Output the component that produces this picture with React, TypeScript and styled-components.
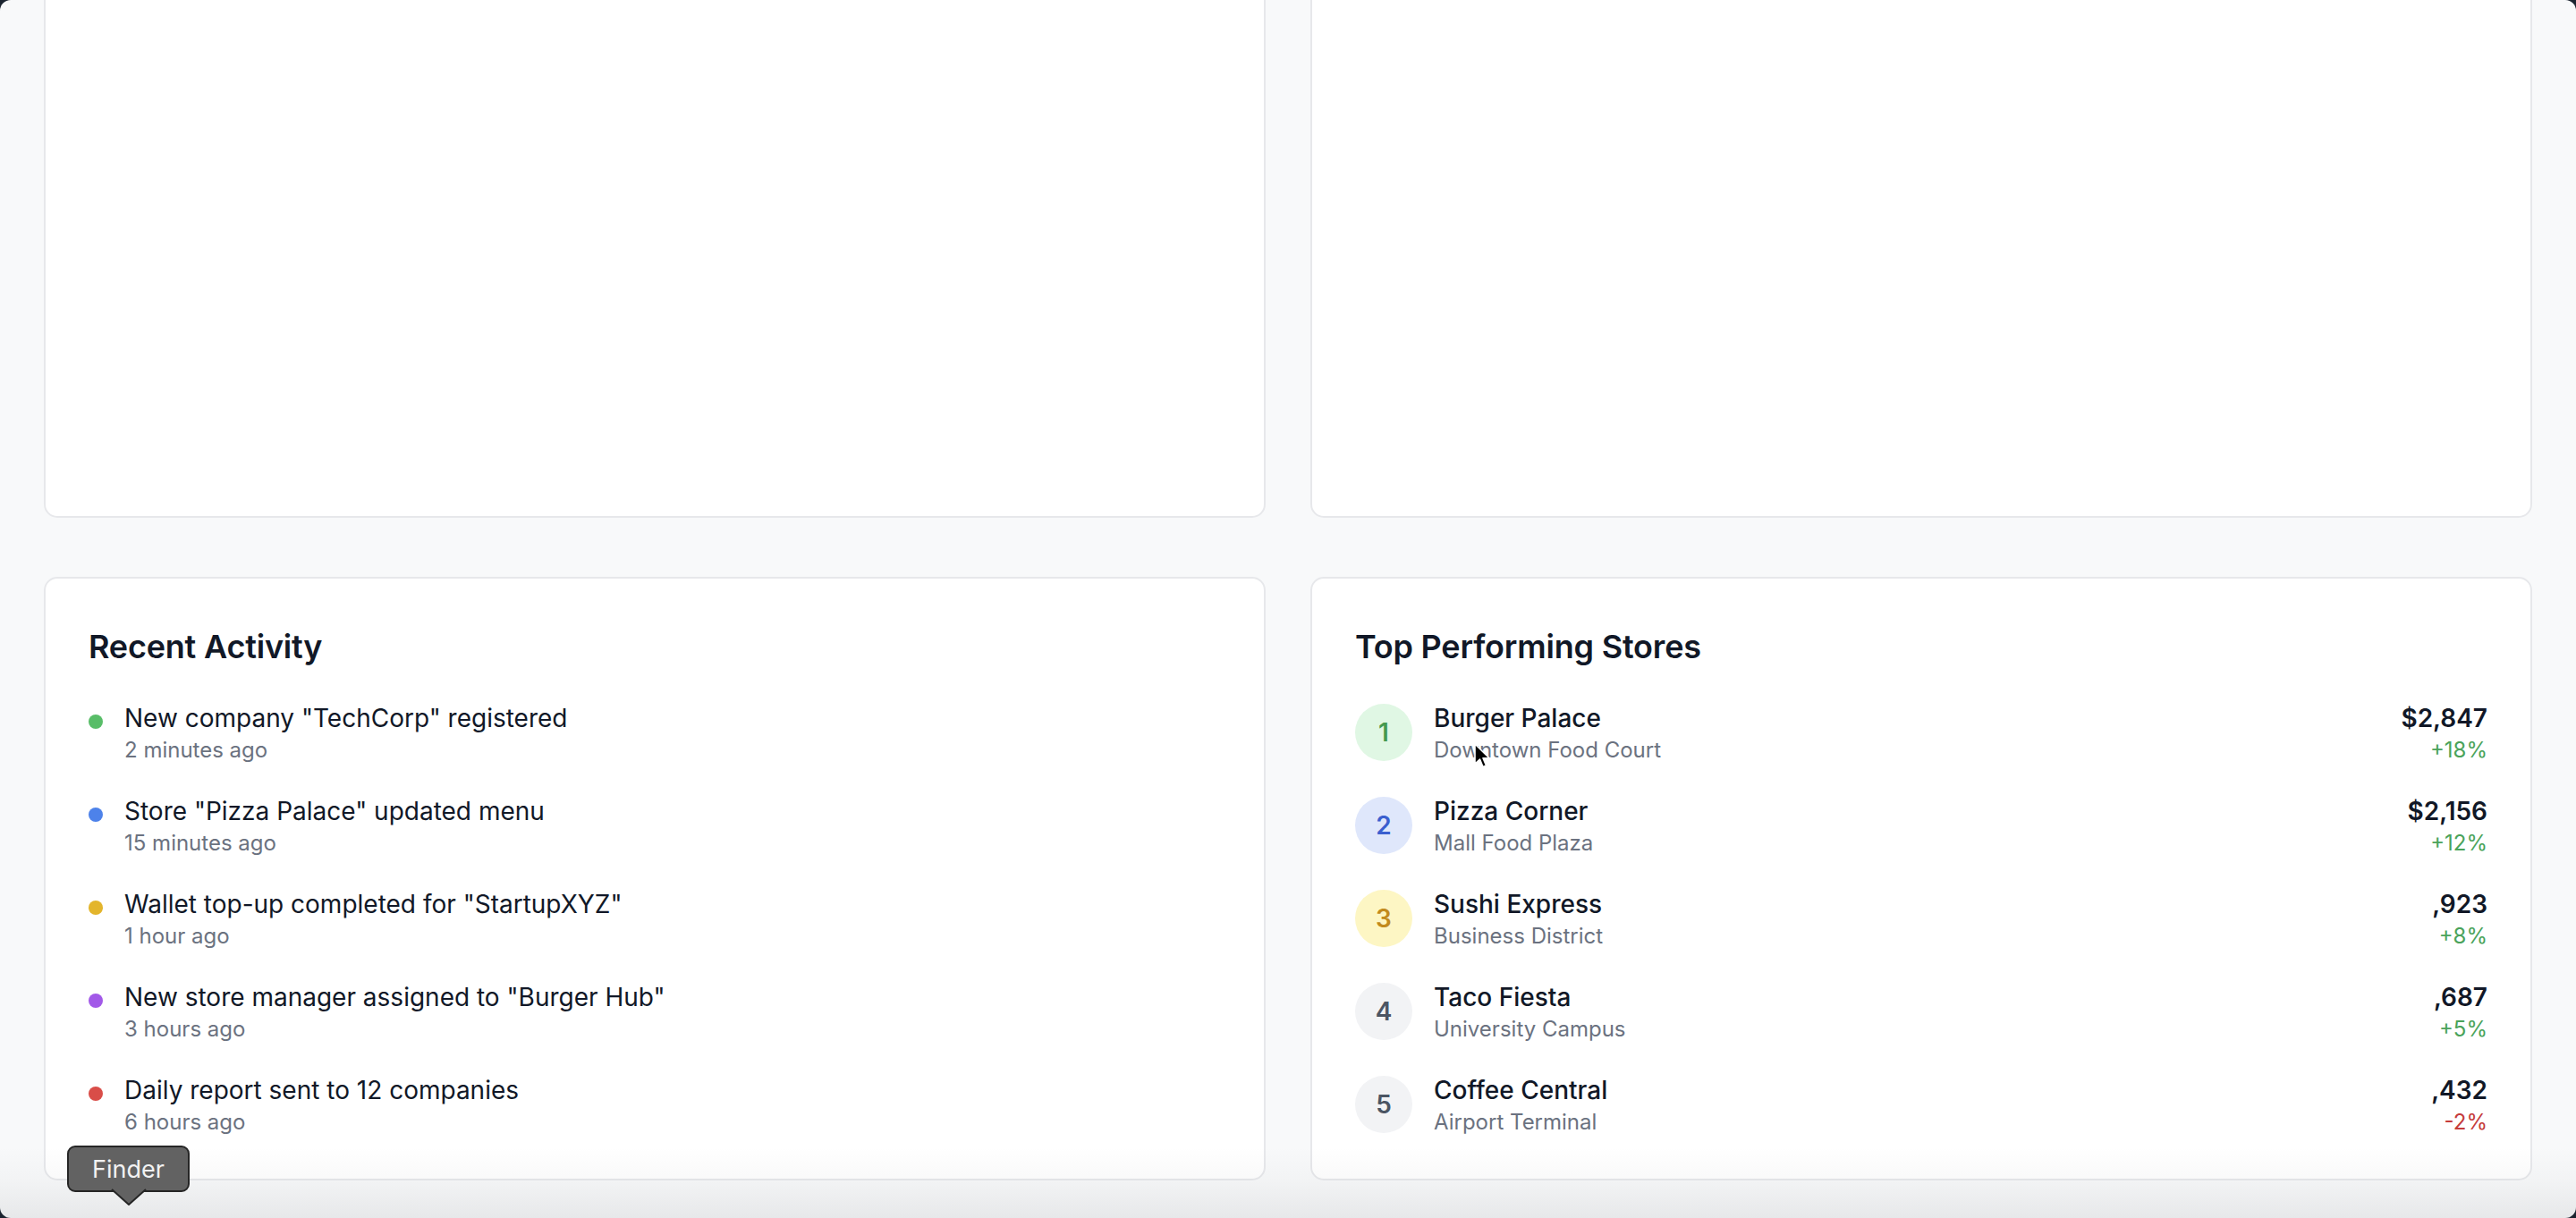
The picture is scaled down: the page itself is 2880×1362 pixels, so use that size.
import React from "react";
import styled, { createGlobalStyle } from "styled-components";

const GlobalStyle = createGlobalStyle`
  html, body {
    margin: 0;
    padding: 0;
    background: #1b2430;
  }
  body {
    font-family: Inter, "Noto Sans", "Liberation Sans", sans-serif;
    -webkit-font-smoothing: antialiased;
  }
  * { box-sizing: border-box; }
`;

const Window = styled.div`
  position: relative;
  width: 100vw;
  height: 100vh;
  overflow: hidden;
  border-radius: 12px;
  background: #f8f9fa;
`;

const Content = styled.main`
  display: grid;
  grid-template-columns: 1fr 1fr;
  column-gap: 50px;
  row-gap: 66px;
  padding: 0 49px;
  margin-top: -209px;
`;

const Card = styled.section<{ $tall?: boolean }>`
  background: #ffffff;
  border: 2px solid #e7e8eb;
  border-radius: 15px;
  height: ${(p) => (p.$tall ? "788px" : "auto")};
  padding: 51px 48px 47px;
`;

const CardTitle = styled.h2`
  margin: 0 0 35px;
  font-size: 36px;
  line-height: 50px;
  font-weight: 600;
  color: #111827;
  letter-spacing: -0.2px;
`;

const List = styled.ul`
  list-style: none;
  margin: 0;
  padding: 0;
  display: flex;
  flex-direction: column;
  gap: 32px;
`;

const ActivityRow = styled.li`
  display: flex;
  align-items: flex-start;
  gap: 24px;
`;

const Dot = styled.span<{ $color: string }>`
  flex: none;
  width: 16px;
  height: 16px;
  margin-top: 16px;
  border-radius: 50%;
  background: ${(p) => p.$color};
`;

const TextBlock = styled.div`
  display: flex;
  flex-direction: column;
  min-width: 0;
`;

const Primary = styled.span<{ $weight?: number }>`
  font-size: 28px;
  line-height: 40px;
  font-weight: ${(p) => p.$weight ?? 400};
  color: #111827;
`;

const Secondary = styled.span`
  font-size: 24px;
  line-height: 32px;
  color: #6b7280;
`;

const StoreRow = styled.li`
  display: flex;
  align-items: center;
  gap: 24px;
`;

const Rank = styled.span<{ $bg: string; $fg: string }>`
  flex: none;
  width: 64px;
  height: 64px;
  border-radius: 50%;
  display: flex;
  align-items: center;
  justify-content: center;
  background: ${(p) => p.$bg};
  color: ${(p) => p.$fg};
  font-size: 28px;
  font-weight: 600;
`;

const StoreInfo = styled(TextBlock)`
  flex: 1;
`;

const Figures = styled.div`
  display: flex;
  flex-direction: column;
  align-items: flex-end;
`;

const Amount = styled.span`
  font-size: 28px;
  line-height: 40px;
  font-weight: 600;
  color: #111827;
`;

const Change = styled.span<{ $up: boolean }>`
  font-size: 24px;
  line-height: 32px;
  color: ${(p) => (p.$up ? "#4aa35a" : "#c53b3b")};
`;

const DockShade = styled.div`
  position: absolute;
  left: 0;
  right: 0;
  bottom: 0;
  height: 80px;
  pointer-events: none;
  background: linear-gradient(
    to bottom,
    rgba(20, 24, 32, 0) 0%,
    rgba(20, 24, 32, 0.025) 45%,
    rgba(20, 24, 32, 0.075) 100%
  );
`;

const Tooltip = styled.div`
  position: absolute;
  left: 75px;
  top: 1281px;
  width: 137px;
  height: 52px;
  border-radius: 9px;
  background: #626262;
  border: 2px solid #262626;
  color: #f2f2f2;
  font-size: 27px;
  display: flex;
  align-items: center;
  justify-content: center;
`;

const TooltipArrow = styled.svg`
  position: absolute;
  left: 48px;
  top: 46px;
  overflow: visible;
`;

const Cursor = styled.svg`
  position: absolute;
  left: 1647px;
  top: 830px;
  pointer-events: none;
`;

const activities = [
  { color: "#58bd68", text: 'New company "TechCorp" registered', time: "2 minutes ago" },
  { color: "#4d82ea", text: 'Store "Pizza Palace" updated menu', time: "15 minutes ago" },
  { color: "#e3b52c", text: 'Wallet top-up completed for "StartupXYZ"', time: "1 hour ago" },
  { color: "#a259e8", text: 'New store manager assigned to "Burger Hub"', time: "3 hours ago" },
  { color: "#d94d48", text: "Daily report sent to 12 companies", time: "6 hours ago" },
];

const stores = [
  { name: "Burger Palace", place: "Downtown Food Court", amount: "$2,847", change: "+18%", up: true, bg: "#e0f7e4", fg: "#45994f" },
  { name: "Pizza Corner", place: "Mall Food Plaza", amount: "$2,156", change: "+12%", up: true, bg: "#dfe7fb", fg: "#3a5fcf" },
  { name: "Sushi Express", place: "Business District", amount: ",923", change: "+8%", up: true, bg: "#fdf6c4", fg: "#c28a1c" },
  { name: "Taco Fiesta", place: "University Campus", amount: ",687", change: "+5%", up: true, bg: "#f2f3f5", fg: "#4b5563" },
  { name: "Coffee Central", place: "Airport Terminal", amount: ",432", change: "-2%", up: false, bg: "#f2f3f5", fg: "#4b5563" },
];

export default function App() {
  return (
    <>
      <GlobalStyle />
      <Window>
        <Content>
          <Card $tall />
          <Card $tall />
          <Card>
            <CardTitle>Recent Activity</CardTitle>
            <List>
              {activities.map((a) => (
                <ActivityRow key={a.text}>
                  <Dot $color={a.color} />
                  <TextBlock>
                    <Primary>{a.text}</Primary>
                    <Secondary>{a.time}</Secondary>
                  </TextBlock>
                </ActivityRow>
              ))}
            </List>
          </Card>
          <Card>
            <CardTitle>Top Performing Stores</CardTitle>
            <List>
              {stores.map((s, i) => (
                <StoreRow key={s.name}>
                  <Rank $bg={s.bg} $fg={s.fg}>{i + 1}</Rank>
                  <StoreInfo>
                    <Primary $weight={500}>{s.name}</Primary>
                    <Secondary>{s.place}</Secondary>
                  </StoreInfo>
                  <Figures>
                    <Amount>{s.amount}</Amount>
                    <Change $up={s.up}>{s.change}</Change>
                  </Figures>
                </StoreRow>
              ))}
            </List>
          </Card>
        </Content>
        <DockShade />
        <Cursor width="20" height="30" viewBox="0 0 20 30">
          <path
            d="M2 2 L2 24 L7.5 19 L11 27.5 L14.5 26 L11 17.8 L18 17.8 Z"
            fill="#000"
            stroke="#fff"
            strokeWidth="1.6"
            strokeLinejoin="round"
          />
        </Cursor>
        <Tooltip>
          Finder
          <TooltipArrow width="40" height="20" viewBox="0 0 40 20">
            <path d="M0 1 L19 18 L38 1" fill="#626262" stroke="#262626" strokeWidth="2" strokeLinejoin="round" />
          </TooltipArrow>
        </Tooltip>
      </Window>
    </>
  );
}
